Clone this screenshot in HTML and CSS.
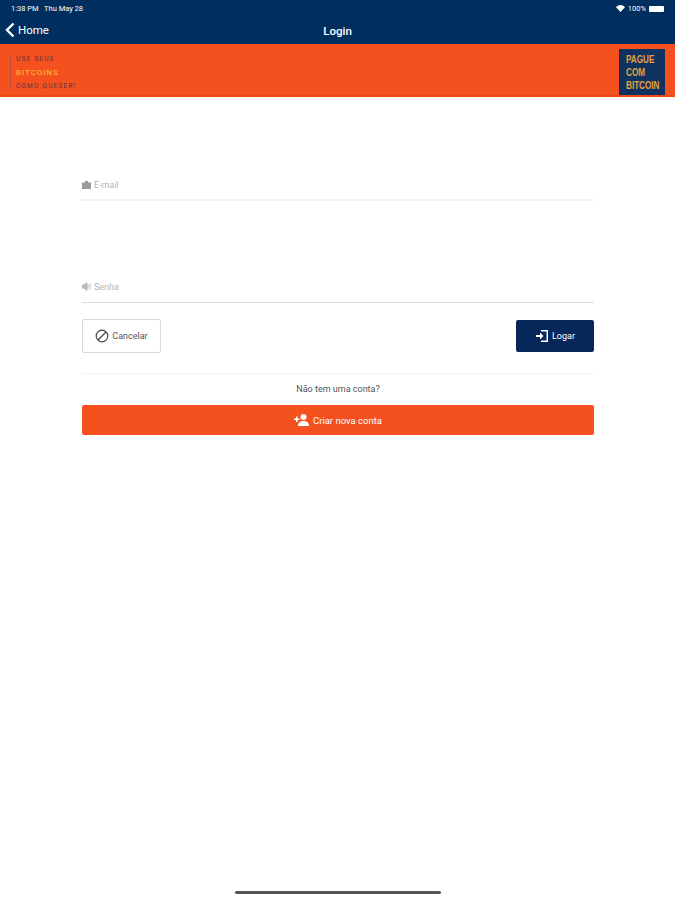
FILE: index.html
```html
<!DOCTYPE html>
<html lang="en">
<head>
    <meta charset="UTF-8">
    <meta name="viewport" content="width=device-width, initial-scale=1.0">
    <title>Login</title>
    <link rel="stylesheet" href="styles.css">
</head>
<body>
    <div class="statusbar">
        <span class="status-time">1:38 PM&nbsp;&nbsp; Thu May 28</span>
        <span class="status-right">
            <svg class="wifi" width="9" height="7" viewBox="0 0 18 14"><path d="M9 14L0 4.5C5-1.2 13-1.2 18 4.500Z" fill="#fff"/></svg>
            <span>100%</span>
            <span class="battery"></span>
        </span>
    </div>
    <div class="navbar">
        <a class="back">
            <svg width="10" height="16" viewBox="0 0 10 16"><path d="M8.500 1.500L2 8l6.500 6.500" fill="none" stroke="#fff" stroke-width="2.400"/></svg>
            Home
        </a>
        <h1>Login</h1>
    </div>
    <div class="banner">
        <div class="slogan">
            <div class="slogan-dark">USE SEUS</div>
            <div class="slogan-gold">BITCOINS</div>
            <div class="slogan-dark">COMO QUESER!</div>
        </div>
        <div class="logo"><div class="logo-text">PAGUE<br>COM<br>BITCOIN</div></div>
    </div>
    <div class="container">
        <div class="field field-email">
            <svg width="9" height="8" viewBox="0 0 9 8"><path d="M0 1.500h9V8H0zM3 1.500V0h3v1.500" fill="#9a9a9a"/></svg>
            <span>E-mail</span>
        </div>
        <div class="field field-password">
            <svg width="9" height="9" viewBox="0 0 9 9"><path d="M0 3h2l3-2.500v8L2 6H0zM6 2.500v4M8 1.500v6" fill="#bbb" stroke="#bbb"/></svg>
            <span>Senha</span>
        </div>
        <div class="actions">
            <button class="btn btn-cancel">
                <svg width="14" height="14" viewBox="0 0 14 14"><circle cx="7" cy="7" r="5.800" fill="none" stroke="#444" stroke-width="1.200"/><path d="M3 11l8-8" stroke="#444" stroke-width="1.200"/></svg>
                Cancelar
            </button>
            <button class="btn btn-login">
                <svg width="14" height="14" viewBox="0 0 14 14"><path d="M6 1h7v12H6v-1.500h5.500v-9H6zM1 6h4V3.500L8.500 7 5 10.500V8H1z" fill="#fff"/></svg>
                Logar
            </button>
        </div>
        <hr class="divider">
        <p class="signup-text">Não tem uma conta?</p>
        <button class="btn btn-signup">
            <svg width="15" height="12" viewBox="0 0 15 12"><circle cx="9.500" cy="3" r="3" fill="#fff"/><path d="M4 12c0-3.500 2-5 5.500-5S15 8.500 15 12zM0 4.500h2v-2h1.500v2h2V6h-2v2H2V6H0z" fill="#fff"/></svg>
            Criar nova conta
        </button>
    </div>
    <div class="home-indicator"></div>
</body>
</html>
```

FILE: styles.css
```css
* {
    box-sizing: border-box;
}

html, body {
    height: 900px;
}

body {
    font-family: Roboto, "Liberation Sans", sans-serif;
    margin: 0;
    background-color: #fff;
    overflow: hidden;
    position: relative;
}

.statusbar {
    height: 17px;
    padding: 0 10px 0 11px;
    display: flex;
    align-items: center;
    justify-content: space-between;
    background-color: #002f5f;
    color: #fff;
    font-size: 7.5px;
}

.status-right {
    display: flex;
    align-items: center;
    gap: 3px;
}

.battery {
    width: 15px;
    height: 6px;
    margin-right: 1px;
    background-color: #fff;
    border-radius: 1px;
}

.navbar {
    height: 27px;
    background-color: #002f5f;
    color: #fff;
    position: relative;
    display: flex;
    align-items: center;
    justify-content: center;
}

.navbar h1 {
    margin: 0;
    font-size: 11.500px;
    font-weight: 500;
}

.back {
    position: absolute;
    left: 5px;
    top: 5px;
    display: flex;
    align-items: center;
    gap: 3px;
    font-size: 11.500px;
}

.banner {
    height: 53px;
    padding: 5px 10px 0;
    display: flex;
    align-items: flex-start;
    justify-content: space-between;
    background-color: #f4511e;
    border-bottom: 2px solid #ea4a12;
}

.slogan {
    border-left: 1px solid #b8503a;
    height: 35px;
    margin-top: 6px;
    padding-left: 5px;
    display: flex;
    flex-direction: column;
    justify-content: space-between;
    font-size: 6.500px;
    letter-spacing: 1.200px;
}

.slogan-dark {
    color: #5b3448;
}

.slogan-gold {
    color: #fbb034;
    font-size: 8px;
    font-weight: 500;
    letter-spacing: 0.900px;
}

.logo {
    width: 46px;
    height: 46px;
    padding: 4px 0 0 7px;
    background-color: #0f3260;
    color: #e8a33a;
    font-family: "Liberation Sans", sans-serif;
    font-size: 11px;
    font-weight: 700;
    line-height: 13px;
    white-space: nowrap;
}

.logo-text {
    transform: scaleX(0.74);
    transform-origin: left top;
}

.container {
    padding: 0 81px 0 82px;
}

.field {
    display: flex;
    align-items: center;
    gap: 3px;
    color: #b5b5b5;
    font-size: 9px;
    border-bottom: 1px solid #f0f0f0;
    height: 22px;
    padding-bottom: 8px;
}

.field-email {
    margin-top: 81px;
    border-bottom-width: 2px;
    height: 23px;
}

.field-password {
    margin-top: 79px;
    height: 23px;
    padding-bottom: 9px;
    border-bottom-color: #dedede;
}

.actions {
    display: flex;
    align-items: center;
    justify-content: space-between;
    margin-top: 16px;
}

.btn {
    display: flex;
    align-items: center;
    justify-content: center;
    gap: 3px;
    font-family: inherit;
    font-size: 9px;
    border-radius: 2px;
    padding: 0;
}

.btn-cancel {
    width: 79px;
    height: 34px;
    background-color: #fff;
    border: 1px solid #d8d8d8;
    color: #555;
}

.btn-login {
    width: 78px;
    height: 32px;
    background-color: #06275a;
    border: none;
    color: #fff;
}

.divider {
    border: none;
    border-top: 1px solid #f2f2f2;
    margin: 20px 0 0;
}

.signup-text {
    margin: 10px 0 0;
    text-align: center;
    font-size: 9px;
    color: #555;
    line-height: 11px;
}

.btn-signup {
    width: 100%;
    height: 30px;
    margin-top: 10px;
    gap: 4px;
    background-color: #f4511e;
    border: none;
    color: #fff;
    font-size: 9.500px;
}

.home-indicator {
    position: absolute;
    left: 235px;
    top: 891px;
    width: 206px;
    height: 3px;
    border-radius: 2px;
    background-color: #555;
}
```
